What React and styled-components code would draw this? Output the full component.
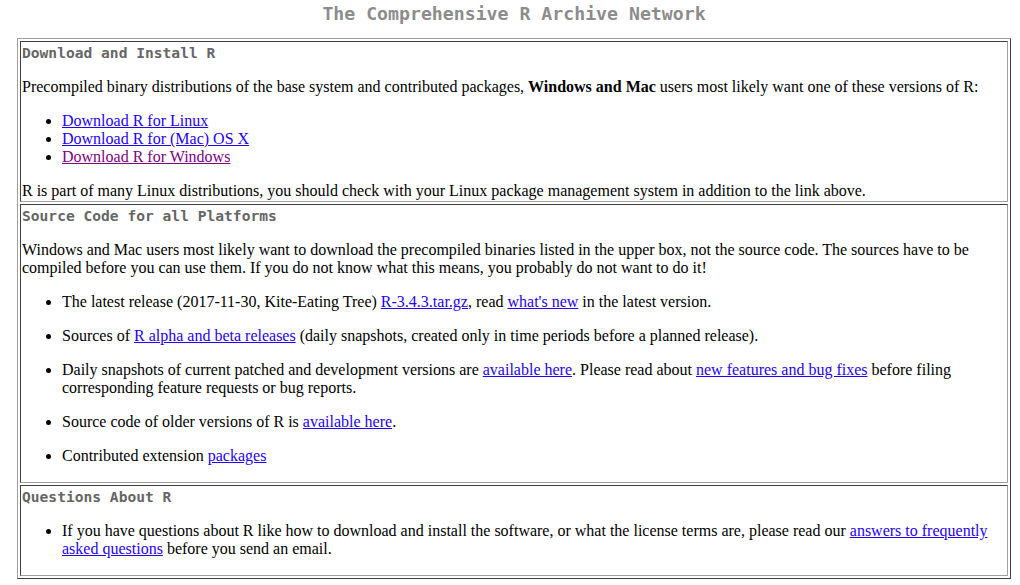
import React from "react";
import styled, { createGlobalStyle } from "styled-components";

const GlobalStyle = createGlobalStyle`
  html, body {
    margin: 0;
    padding: 0;
    background: #ffffff;
  }
  body {
    font-family: "Liberation Serif", "Times New Roman", serif;
    font-size: 16px;
    line-height: 18px;
    color: #000000;
  }
`;

const Page = styled.div`
  width: 994px;
  margin-left: 17px;
  padding-top: 3px;
`;

const Title = styled.h1`
  margin: 0 0 13px;
  font-family: "DejaVu Sans Mono", "Liberation Mono", monospace;
  font-weight: bold;
  font-size: 18.2px;
  line-height: 22px;
  color: #8c8c8c;
  text-align: center;
`;

const Box = styled.div`
  display: flex;
  flex-direction: column;
  gap: 2px;
  padding: 2px;
  border: 1px solid;
  border-color: #a0a0a0 #404040 #404040 #a0a0a0;
`;

const Cell = styled.section`
  display: flex;
  flex-direction: column;
  gap: 16px;
  padding: 2px 1px ${(p) => (p.$tail ? "17px" : "1px")};
  border: 1px solid;
  border-color: #404040 #a0a0a0 #a0a0a0 #404040;
`;

const Heading = styled.h2`
  margin: 0;
  font-family: "DejaVu Sans Mono", "Liberation Mono", monospace;
  font-weight: bold;
  font-size: 14.6px;
  line-height: 18px;
  color: #666666;
`;

const Para = styled.p`
  margin: 0;
`;

const List = styled.ul`
  margin: 0;
  padding-left: 40px;
  list-style: disc;

  li + li {
    margin-top: ${(p) => (p.$spaced ? "16px" : "0")};
  }
`;

const Link = styled.a`
  color: ${(p) => (p.$visited ? "#80007f" : "#1f00ff")};
  text-decoration: underline;
`;

const App = () => {
  return (
    <>
      <GlobalStyle />
      <Page>
        <Title>The Comprehensive R Archive Network</Title>
        <Box>
          <Cell>
            <Heading>Download and Install R</Heading>
            <Para>
              Precompiled binary distributions of the base system and contributed packages,{" "}
              <b>Windows and Mac</b> users most likely want one of these versions of R:
            </Para>
            <List>
              <li>
                <Link href="#">Download R for Linux</Link>
              </li>
              <li>
                <Link href="#">Download R for (Mac) OS X</Link>
              </li>
              <li>
                <Link href="#" $visited>
                  Download R for Windows
                </Link>
              </li>
            </List>
            <Para>
              R is part of many Linux distributions, you should check with your Linux package
              management system in addition to the link above.
            </Para>
          </Cell>

          <Cell $tail>
            <Heading>Source Code for all Platforms</Heading>
            <Para>
              Windows and Mac users most likely want to download the precompiled binaries listed in
              the upper box, not the source code. The sources have to be compiled before you can use
              them. If you do not know what this means, you probably do not want to do it!
            </Para>
            <List $spaced>
              <li>
                The latest release (2017-11-30, Kite-Eating Tree){" "}
                <Link href="#">R-3.4.3.tar.gz</Link>, read <Link href="#">what's new</Link> in the
                latest version.
              </li>
              <li>
                Sources of <Link href="#">R alpha and beta releases</Link> (daily snapshots, created
                only in time periods before a planned release).
              </li>
              <li>
                Daily snapshots of current patched and development versions are{" "}
                <Link href="#">available here</Link>. Please read about{" "}
                <Link href="#">new features and bug fixes</Link> before filing corresponding feature
                requests or bug reports.
              </li>
              <li>
                Source code of older versions of R is <Link href="#">available here</Link>.
              </li>
              <li>
                Contributed extension <Link href="#">packages</Link>
              </li>
            </List>
          </Cell>

          <Cell $tail>
            <Heading>Questions About R</Heading>
            <List>
              <li>
                If you have questions about R like how to download and install the software, or what
                the license terms are, please read our{" "}
                <Link href="#">answers to frequently asked questions</Link> before you send an email.
              </li>
            </List>
          </Cell>
        </Box>
      </Page>
    </>
  );
};

export default App;
